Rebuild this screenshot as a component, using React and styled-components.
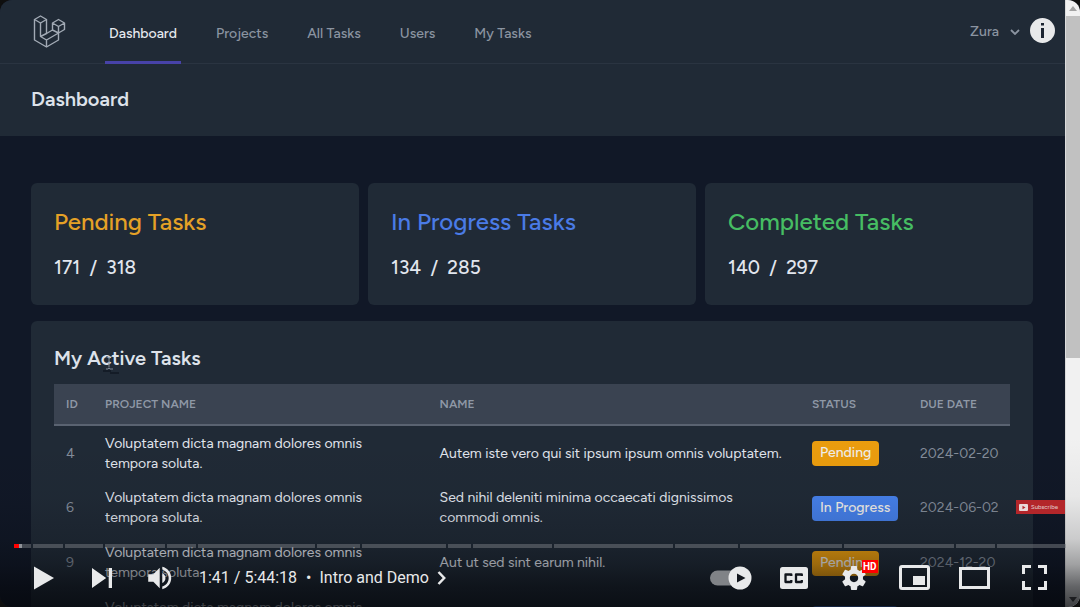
import React from "react";
import styled, { createGlobalStyle } from "styled-components";

const GlobalStyle = createGlobalStyle`
  * { box-sizing: border-box; }
  body {
    margin: 0;
    background: #0f0f0f;
    font-family: Figtree, Inter, "Liberation Sans", sans-serif;
    overflow: hidden;
  }
  button { border: 0; padding: 0; background: none; color: inherit; font: inherit; cursor: pointer; }
  h1, h2, p { margin: 0; }
`;

const Player = styled.div`
  position: relative;
  display: flex;
  height: 100vh;
  overflow: hidden;
  border-radius: 12px;
  background: #111827;
`;

const Page = styled.div`
  flex: 1;
  min-width: 0;
  color: #e2e6ee;
`;

const NavBar = styled.nav`
  display: flex;
  align-items: stretch;
  height: 64px;
  padding: 0 45px 0 32px;
  background: #202a36;
  border-bottom: 1px solid #2a3441;
`;

const LogoLink = styled.a`
  display: flex;
  align-items: center;
  margin-right: 37px;
`;

const NavLinks = styled.div`
  display: flex;
  gap: 31px;
`;

const NavLink = styled.a`
  display: flex;
  align-items: center;
  margin-bottom: -1px;
  padding: 5px 4px 0;
  border-bottom: 3px solid ${(p) => (p.$active ? "#4742a8" : "transparent")};
  color: ${(p) => (p.$active ? "#e6e9ef" : "#8b94a1")};
  font-size: 14px;
  font-weight: 500;
  text-decoration: none;
`;

const UserMenu = styled.button`
  display: flex;
  align-items: center;
  gap: 11px;
  margin-left: auto;
  color: #8b94a1;
  font-size: 14px;
  font-weight: 500;
`;

const PageHeader = styled.header`
  padding: 21px 31px 23px;
  background: #202a36;
`;

const PageTitle = styled.h1`
  font-size: 20px;
  line-height: 28px;
  font-weight: 600;
  color: #dde2ea;
`;

const Main = styled.main`
  display: grid;
  gap: 16px;
  padding: 47px 32px 48px 31px;
`;

const Stats = styled.div`
  display: grid;
  grid-template-columns: repeat(3, 1fr);
  gap: 9px;
`;

const Card = styled.section`
  padding: 24px 23px;
  border-radius: 6px;
  background: #202a36;
`;

const StatTitle = styled.h2`
  color: ${(p) => p.$color};
  font-size: 24px;
  line-height: 30px;
  font-weight: 500;
`;

const StatValue = styled.p`
  margin-top: 18px;
  font-size: 19px;
  line-height: 26px;
  font-weight: 500;
  white-space: pre;
`;

const PanelTitle = styled.h2`
  margin-bottom: 12px;
  font-size: 20px;
  line-height: 27px;
  font-weight: 600;
  color: #dde2ea;
`;

const TaskTable = styled.table`
  width: 100%;
  table-layout: fixed;
  border-collapse: collapse;
  font-size: 14px;
  line-height: 20px;
`;

const Col = styled.col`
  width: ${(p) => p.$w};
`;

const HeadCell = styled.th`
  height: 41px;
  padding: 0 12px;
  background: #3a4351;
  border-bottom: 2px solid #5a6371;
  color: #8f98a6;
  font-size: 12px;
  line-height: 16px;
  font-weight: 600;
  text-align: left;
  text-transform: uppercase;
`;

const Cell = styled.td`
  height: 55px;
  padding: 1px 12px 0;
  color: ${(p) => (p.$muted ? "#848d9a" : "#e2e6ee")};
  white-space: ${(p) => (p.$muted ? "nowrap" : "normal")};
`;

const CellText = styled.div`
  max-width: ${(p) => (p.$narrow ? "290px" : "none")};
`;

const Badge = styled.span`
  display: inline-block;
  padding: 2px 8px 3px;
  border-radius: 4px;
  background: ${(p) => (p.$status === "Pending" ? "#eb9d0e" : "#4680ea")};
  color: #f0eee9;
  font-weight: 500;
  white-space: nowrap;
`;

const Scrollbar = styled.div`
  display: flex;
  flex-direction: column;
  width: 15px;
  border-left: 1px solid #dcdcdc;
  background: #f1f1f1;
`;

const ScrollArrow = styled.div`
  display: flex;
  align-items: center;
  justify-content: center;
  height: 16px;
`;

const ScrollTrack = styled.div`
  display: flex;
  flex-direction: column;
  flex: 1;

  &::after {
    content: "";
    flex: 233;
  }
`;

const ScrollThumb = styled.div`
  flex: 342;
  background: #c1c1c1;
`;

const Cursor = styled.svg`
  position: absolute;
  left: 102px;
  top: 355px;
`;

const InfoButton = styled.button`
  position: absolute;
  top: 18px;
  right: 25px;
  width: 25px;
  height: 25px;
`;

const Shade = styled.div`
  position: absolute;
  inset: auto 0 0 0;
  height: 170px;
  background: linear-gradient(
    to bottom,
    rgba(4, 6, 10, 0) 0%,
    rgba(4, 6, 10, 0.04) 35%,
    rgba(4, 6, 10, 0.16) 60%,
    rgba(4, 6, 10, 0.34) 75%,
    rgba(4, 6, 10, 0.6) 88%,
    rgba(4, 6, 10, 0.76) 100%
  );
`;

const Subscribe = styled.button`
  position: absolute;
  right: 15px;
  bottom: 93px;
  display: flex;
  align-items: center;
  gap: 3px;
  height: 14px;
  width: 49px;
  padding-left: 3px;
  background: #b3262a;
  color: #e0c4c5;
  font-size: 6px;
  line-height: 14px;
  font-weight: 500;
`;

const Chrome = styled.div`
  position: absolute;
  inset: auto 14px 0 14px;
  color: #e8e9ea;
  font-family: Roboto, sans-serif;
`;

const Progress = styled.div`
  position: relative;
  display: flex;
  gap: 2px;
  height: 4px;
`;

const Chapter = styled.div`
  display: flex;
  flex: ${(p) => p.$span} 1 0;
  background: rgba(120, 124, 130, 0.5);
`;

const Fill = styled.div`
  width: ${(p) => (p.$played ? "5px" : "3px")};
  background: ${(p) => (p.$played ? "#ff0000" : "#8f9298")};
`;

const Seek = styled.input`
  position: absolute;
  inset: 0;
  width: 100%;
  height: 100%;
  margin: 0;
  opacity: 0;
`;

const Controls = styled.div`
  display: flex;
  align-items: center;
  height: 59px;
  padding: 0 2px 0 1px;
`;

const ControlButton = styled.button`
  position: relative;
  display: flex;
  align-items: center;
  justify-content: center;
  width: ${(p) => p.$width}px;
  height: 59px;
`;

const TimeText = styled.span`
  margin-left: 8px;
  font-size: 16px;
  line-height: 20px;
`;

const ChapterButton = styled.button`
  display: flex;
  align-items: center;
  gap: 8px;
  margin-left: 9px;
  font-size: 16px;
  line-height: 20px;
`;

const Right = styled.div`
  display: flex;
  margin-left: auto;
`;

const Hd = styled.span`
  position: absolute;
  top: 12px;
  left: 38px;
  padding: 0 1px;
  background: #ff0000;
  color: #fff;
  font-size: 10px;
  line-height: 13px;
  font-weight: 700;
`;

const LaravelLogo = () => (
  <svg width="36" height="36" viewBox="0 -1 36 36" fill="none" stroke="#a2aab5" strokeWidth="1.4" strokeLinejoin="round" aria-hidden="true">
    <path d="M2.500 4.500 8.500 1l6 3.500L8.500 8z" />
    <path d="M2.500 4.500V25L14.500 32 26.500 25V18L14.500 25 8.500 21.500V8M14.500 4.500V18.500L8.500 21.500M14.500 25v7" />
    <path d="M14.500 18.500 20.500 15l6 3M20.500 15V8L26.500 4.500 32.500 8v6.500L26.500 18zM20.500 8l6 3.500L32.500 8M26.500 11.500V18" />
  </svg>
);

const PlayIcon = () => (
  <svg width="20" height="24" viewBox="0 0 20 24" fill="currentColor"><path d="M0 0.500 20 12 0 23.500z" /></svg>
);

const NextIcon = () => (
  <svg width="20" height="20" viewBox="0 0 20 20" fill="currentColor"><path d="M0 0 14.200 10 0 20zM16.700 0H20v20h-3.300z" /></svg>
);

const VolumeIcon = () => (
  <svg width="46" height="46" viewBox="0 0 36 36" fill="currentColor">
    <path d="M8 21h4l5 5V10l-5 5H8zM19 14v8c1.480-.680 2.500-2.230 2.500-4 0-1.740-1.020-3.260-2.500-4z" />
    <path d="M19 11.290C21.890 12.150 24 14.830 24 18s-2.110 5.850-5 6.710v2.060c4.010-.910 7-4.490 7-8.770s-2.990-7.860-7-8.770z" />
  </svg>
);

const AutoplayIcon = () => (
  <svg width="42" height="24" viewBox="0 0 42 24">
    <rect x="0" y="4.500" width="38" height="15" rx="7.500" fill="#808387" />
    <circle cx="30" cy="12" r="11.500" fill="#e8e9ea" />
    <path d="M27 7.500 35.500 12 27 16.500z" fill="#11151c" />
  </svg>
);

const CaptionsIcon = () => (
  <svg width="28" height="22" viewBox="0 0 28 22">
    <rect width="28" height="22" rx="2.500" fill="#e8e9ea" />
    <path d="M11.300 9V7.500H5.500v7.500h5.800v-2M21.800 9V7.500H16v7.500h5.800v-2" fill="none" stroke="#11151c" strokeWidth="2.300" strokeLinejoin="round" />
  </svg>
);

const GearIcon = () => (
  <svg width="54" height="54" viewBox="0 0 36 36" fill="currentColor">
    <path d="m23.940 18.780c.03-.25.05-.51.05-.78 0-.27-.02-.52-.05-.78l1.680-1.320c.15-.12.19-.33.09-.51l-1.600-2.760c-.09-.17-.31-.24-.48-.17l-1.990.8c-.41-.32-.86-.58-1.350-.78l-.30-2.120c-.02-.19-.19-.33-.39-.33l-3.200 0c-.2 0-.36.14-.39.33l-.30 2.120c-.48.2-.93.47-1.350.78l-1.990-.8c-.18-.07-.39 0-.48.17l-1.600 2.760c-.10.17-.05.39.09.51l1.680 1.320c-.03.25-.05.52-.05.78 0 .26.02.52.05.78l-1.680 1.320c-.15.12-.19.33-.09.51l1.600 2.760c.09.17.31.24.48.17l1.990-.8c.41.32.86.58 1.350.78l.30 2.120c.02.19.19.33.39.33l3.200 0c.2 0 .36-.14.39-.33l.30-2.120c.48-.2.93-.47 1.350-.78l1.990.8c.18.07.39 0 .48-.17l1.600-2.760c.09-.17.05-.39-.09-.51l-1.680-1.320zm-5.940 2.010c-1.540 0-2.800-1.250-2.800-2.800 0-1.540 1.250-2.800 2.800-2.800 1.540 0 2.800 1.250 2.800 2.800 0 1.540-1.250 2.800-2.800 2.800z" />
  </svg>
);

const MiniplayerIcon = () => (
  <svg width="31" height="25" viewBox="0 0 31 25">
    <rect x="1.500" y="1.500" width="28" height="22" rx="1.500" fill="none" stroke="currentColor" strokeWidth="3" />
    <path d="M14 11h12v9H14z" fill="currentColor" />
  </svg>
);

const TheaterIcon = () => (
  <svg width="31" height="22" viewBox="0 0 31 22">
    <rect x="1.500" y="1.500" width="28" height="19" fill="none" stroke="currentColor" strokeWidth="3" />
  </svg>
);

const FullscreenIcon = () => (
  <svg width="25" height="25" viewBox="0 0 25 25" fill="none" stroke="currentColor" strokeWidth="3">
    <path d="M1.500 9V1.500H9M16 1.500h7.500V9M23.500 16v7.500H16M9 23.500H1.500V16" />
  </svg>
);

const NAV = ["Dashboard", "Projects", "All Tasks", "Users", "My Tasks"];

const STATS = [
  { title: "Pending Tasks", value: "171  /  318", color: "#e5a126" },
  { title: "In Progress Tasks", value: "134  /  285", color: "#4a7be6" },
  { title: "Completed Tasks", value: "140  /  297", color: "#46bd63" },
];

const PROJECT = "Voluptatem dicta magnam dolores omnis tempora soluta.";

const TASKS = [
  { id: 4, name: "Autem iste vero qui sit ipsum ipsum omnis voluptatem.", status: "Pending", due: "2024-02-20" },
  { id: 6, name: "Sed nihil deleniti minima occaecati dignissimos commodi omnis.", status: "In Progress", due: "2024-06-02" },
  { id: 9, name: "Aut ut sed sint earum nihil.", status: "Pending", due: "2024-12-20" },
  { id: "", name: "", status: "In Progress", due: "" },
];

const CHAPTERS = [17, 30, 38, 60, 29, 117, 43, 84, 23, 78, 119, 63, 102, 110, 39, 69];

export default function App() {
  return (
    <>
      <GlobalStyle />
      <Player>
        <Page>
          <NavBar>
            <LogoLink href="#" aria-label="Home"><LaravelLogo /></LogoLink>
            <NavLinks>
              {NAV.map((label, i) => (
                <NavLink key={label} href="#" $active={i === 0}>{label}</NavLink>
              ))}
            </NavLinks>
            <UserMenu>
              Zura
              <svg width="10" height="6" viewBox="0 0 10 6" fill="none" stroke="currentColor" strokeWidth="1.800"><path d="M1 1l4 4 4-4" /></svg>
            </UserMenu>
          </NavBar>
          <PageHeader><PageTitle>Dashboard</PageTitle></PageHeader>
          <Main>
            <Stats>
              {STATS.map((s) => (
                <Card key={s.title}>
                  <StatTitle $color={s.color}>{s.title}</StatTitle>
                  <StatValue>{s.value}</StatValue>
                </Card>
              ))}
            </Stats>
            <Card>
              <PanelTitle>My Active Tasks</PanelTitle>
              <TaskTable>
                <colgroup>
                  <Col $w="39px" /><Col $w="35%" /><Col $w="auto" /><Col $w="108px" /><Col $w="102px" />
                </colgroup>
                <thead>
                  <tr>
                    <HeadCell>ID</HeadCell>
                    <HeadCell>Project Name</HeadCell>
                    <HeadCell>Name</HeadCell>
                    <HeadCell>Status</HeadCell>
                    <HeadCell>Due Date</HeadCell>
                  </tr>
                </thead>
                <tbody>
                  {TASKS.map((t, i) => (
                    <tr key={i}>
                      <Cell $muted>{t.id}</Cell>
                      <Cell><CellText $narrow>{PROJECT}</CellText></Cell>
                      <Cell><CellText>{t.name}</CellText></Cell>
                      <Cell><Badge $status={t.status}>{t.status}</Badge></Cell>
                      <Cell $muted>{t.due}</Cell>
                    </tr>
                  ))}
                </tbody>
              </TaskTable>
            </Card>
          </Main>
        </Page>
        <Scrollbar>
          <ScrollArrow><svg width="8" height="5" viewBox="0 0 8 5"><path d="M4 0l4 5H0z" fill="#a3a3a3" /></svg></ScrollArrow>
          <ScrollTrack><ScrollThumb /></ScrollTrack>
          <ScrollArrow><svg width="8" height="5" viewBox="0 0 8 5"><path d="M0 0h8L4 5z" fill="#505050" /></svg></ScrollArrow>
        </Scrollbar>

        <Cursor width="20" height="20" viewBox="0 0 20 20" fill="none" aria-hidden="true">
          <path d="M4 1.500h2l1 1 1-1h2M7 2.500v10M4 14h2l1-1 1 1h3" stroke="#7d8794" />
          <path d="M1 16h8M8 18h9" stroke="#111923" strokeWidth="1.500" />
        </Cursor>
        <InfoButton aria-label="Info">
          <svg width="25" height="25" viewBox="0 0 25 25">
            <circle cx="12.500" cy="12.500" r="12.500" fill="#e8e9ea" />
            <path d="M11 5h3v2.500h-3zM11 10h3v10h-3z" fill="#1b2430" />
          </svg>
        </InfoButton>
        <Shade />
        <Subscribe>
          <svg width="9" height="7" viewBox="0 0 9 7"><rect width="9" height="7" rx="1" fill="#ead9d9" /><path d="M3.500 1.800 6.500 3.500l-3 1.700z" fill="#b3262a" /></svg>
          Subscribe
        </Subscribe>
        <Chrome>
          <Progress>
            {CHAPTERS.map((span, i) => (
              <Chapter key={i} $span={span}>
                {i === 0 && <><Fill $played /><Fill /></>}
              </Chapter>
            ))}
            <Seek type="range" aria-label="Seek" min="0" max="20658" defaultValue="101" />
          </Progress>
          <Controls>
            <ControlButton $width={58} aria-label="Play"><PlayIcon /></ControlButton>
            <ControlButton $width={58} aria-label="Next"><NextIcon /></ControlButton>
            <ControlButton $width={60} aria-label="Mute"><VolumeIcon /></ControlButton>
            <TimeText>1:41 / 5:44:18</TimeText>
            <ChapterButton>
              <span>•</span>
              <span>Intro and Demo</span>
              <svg width="9" height="14" viewBox="0 0 9 14" fill="none" stroke="currentColor" strokeWidth="2.500"><path d="M1.500 1 7.200 7l-5.700 6" /></svg>
            </ChapterButton>
            <Right>
              <ControlButton $width={66} aria-label="Autoplay" role="switch" aria-checked="true"><AutoplayIcon /></ControlButton>
              <ControlButton $width={60} aria-label="Captions"><CaptionsIcon /></ControlButton>
              <ControlButton $width={60} aria-label="Settings"><GearIcon /><Hd>HD</Hd></ControlButton>
              <ControlButton $width={60} aria-label="Miniplayer"><MiniplayerIcon /></ControlButton>
              <ControlButton $width={60} aria-label="Theater mode"><TheaterIcon /></ControlButton>
              <ControlButton $width={60} aria-label="Full screen"><FullscreenIcon /></ControlButton>
            </Right>
          </Controls>
        </Chrome>
      </Player>
    </>
  );
}
